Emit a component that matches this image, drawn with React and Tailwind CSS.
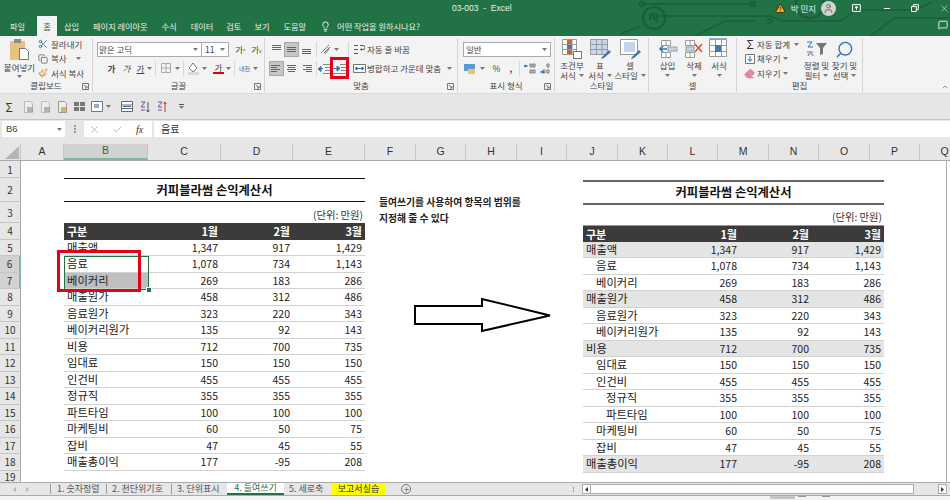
import React from 'react';
import { Scissors, Copy, Paintbrush, Lightbulb, Search, Eraser, X, Check, MessageSquare, Plus, User, TriangleAlert, ChevronDown } from 'lucide-react';

// === 데이터 ===
const COLUMNS = [
  { l: 'A', w: 'w-[43px]' }, { l: 'B', w: 'w-[84px]', on: true }, { l: 'C', w: 'w-[73px]' }, { l: 'D', w: 'w-[72px]' },
  { l: 'E', w: 'w-[72px]' }, { l: 'F', w: 'w-[51px]' }, { l: 'G', w: 'w-[50px]' }, { l: 'H', w: 'w-[51px]' },
  { l: 'I', w: 'w-[50px]' }, { l: 'J', w: 'w-[51px]' }, { l: 'K', w: 'w-[50px]' }, { l: 'L', w: 'w-[50px]' },
  { l: 'M', w: 'w-[51px]' }, { l: 'N', w: 'w-[50px]' }, { l: 'O', w: 'w-[51px]' }, { l: 'P', w: 'w-[50px]' },
  { l: 'Q', w: 'w-[50px]' },
];

const ROWS = [
  { n: 1, h: 'h-[17px]' }, { n: 2, h: 'h-[24px]' }, { n: 3, h: 'h-[21px]' }, { n: 4, h: 'h-[16.5px]' },
  { n: 5, h: 'h-[16.5px]' }, { n: 6, h: 'h-[16.5px]', on: true }, { n: 7, h: 'h-[16.5px]', on: true },
  { n: 8, h: 'h-[16.5px]' }, { n: 9, h: 'h-[16.5px]' }, { n: 10, h: 'h-[16.5px]' }, { n: 11, h: 'h-[16.5px]' },
  { n: 12, h: 'h-[16.5px]' }, { n: 13, h: 'h-[16.5px]' }, { n: 14, h: 'h-[16.5px]' }, { n: 15, h: 'h-[16.5px]' },
  { n: 16, h: 'h-[16.5px]' }, { n: 17, h: 'h-[16.5px]' }, { n: 18, h: 'h-[16.5px]' }, { n: 19, h: 'h-[12.5px]' },
];

const DATA = [
  ['매출액', '1,347', '917', '1,429', 0, true],
  ['음료', '1,078', '734', '1,143', 1],
  ['베이커리', '269', '183', '286', 1],
  ['매출원가', '458', '312', '486', 0, true],
  ['음료원가', '323', '220', '343', 1],
  ['베이커리원가', '135', '92', '143', 1],
  ['비용', '712', '700', '735', 0, true],
  ['임대료', '150', '150', '150', 1],
  ['인건비', '455', '455', '455', 1],
  ['정규직', '355', '355', '355', 2],
  ['파트타임', '100', '100', '100', 2],
  ['마케팅비', '60', '50', '75', 1],
  ['잡비', '47', '45', '55', 1],
  ['매출총이익', '177', '-95', '208', 0, true],
];

const INDENT = ['pl-[3px]', 'pl-[13px]', 'pl-[23px]'];

// === 아이콘 ===
const Caret = ({ className = '' }) => (
  <svg width="5" height="3" viewBox="0 0 5 3" className={`shrink-0 ${className}`}><path d="M0 0h5L2.5 3z" fill="#777" /></svg>
);

const Lines = ({ rows }) => (
  <svg width="13" height="11" viewBox="0 0 13 11">
    {rows.map(([x1, x2, y]) => <line key={y} x1={x1} x2={x2} y1={y + 0.5} y2={y + 0.5} stroke="#666" />)}
  </svg>
);

const IconBtn = ({ on, children }) => (
  <div className={`w-[15px] h-[15px] flex items-center justify-center ${on ? 'bg-[#c6c6c6] border border-[#a8a8a8]' : ''}`}>{children}</div>
);

const Launcher = () => (
  <svg width="7" height="7" viewBox="0 0 7 7" className="absolute right-[3px] bottom-[2px]">
    <path d="M.5.5h6v6h-6zM2 2l3 3M5 3v2H3" fill="none" stroke="#777" />
  </svg>
);

const Sep = () => <div className="w-px h-[15px] bg-[#d8d8d8] mx-[3px]" />;

const GridIcon = ({ children }) => (
  <svg width="24" height="22" viewBox="0 0 24 22">
    <path d="M2.5 1.5h17v17h-17zM2.5 7.5h17M2.5 13.5h17M8.5 1.5v17M14.5 1.5v17" fill="#fff" stroke="#9a9a9a" />
    {children}
  </svg>
);

const Brush = () => <path d="M14 19l7-7 2 2-7 6-3 1z" fill="#3f78b5" />;

const Circuit = () => (
  <svg width="330" height="36" viewBox="0 0 330 36" className="absolute right-0 top-0" fill="none" stroke="#1a5f39" strokeWidth="1.5">
    <path d="M22 4h112M36 16h115l10 5h60l15-11h60l16-8" />
    <circle cx="22" cy="4" r="2.5" /><circle cx="133" cy="4" r="2.5" />
    <circle cx="34" cy="18" r="11" strokeWidth="2" />
    <path d="M30 14l8 8M30 14v6M30 14h6" strokeWidth="2" />
    <circle cx="190" cy="4" r="14" strokeWidth="2.5" />
    <circle cx="36" cy="16" r="2" /><circle cx="150" cy="21" r="2" />
    <path d="M0 34l20-8M75 36l30-15h30" />
    <path d="M250 36l25-18h55" />
  </svg>
);

// === 리본 ===
const Group = ({ label, className, launcher, children }) => (
  <div className={`relative shrink-0 flex flex-col border-r border-[#d4d4d4] mt-[2px] mb-px ${className}`}>
    <div className="flex-1 min-h-0">{children}</div>
    <div className="h-[13px] leading-[13px] text-center">{label}</div>
    {launcher && <Launcher />}
  </div>
);

const BigBtn = ({ icon, top, bottom, w }) => (
  <div className={`flex flex-col items-center shrink-0 ${w}`}>
    <div className="h-[22px] flex items-center justify-center">{icon}</div>
    <div className="h-[10px] leading-[10px]">{top}</div>
    <div className="h-[10px] leading-[10px] flex items-center gap-[3px]">{bottom}<Caret /></div>
  </div>
);

const Ribbon = () => (
  <div className="h-[57px] shrink-0 bg-[#f3f3f3] flex text-[8.5px] text-[#444]">
    <Group label="클립보드" className="w-[93px]" launcher>
      <div className="flex pl-[3px] pt-[1px]">
        <div className="w-[33px] flex flex-col items-center">
          <svg width="22" height="22" viewBox="0 0 22 22">
            <rect x="1" y="2" width="15" height="19" fill="#e8c27c" />
            <rect x="5" y="0" width="7" height="4" fill="#8a8a8a" />
            <path d="M10.5 9.5h6l3 3v8h-9z" fill="#fff" stroke="#777" />
          </svg>
          <div className="leading-[11px] mt-[1px]">붙여넣기</div>
          <Caret className="mt-[2px]" />
        </div>
        <div className="ml-[2px] -mt-[2px] flex flex-col">
          <div className="h-[14.5px] flex items-center gap-[3px]"><Scissors size={10} color="#35689c" /><span>잘라내기</span></div>
          <div className="h-[14.5px] flex items-center gap-[3px]"><Copy size={10} color="#667" /><span>복사</span><Caret className="ml-[6px]" /></div>
          <div className="h-[14.5px] flex items-center gap-[3px]"><Paintbrush size={10} color="#c68a2e" /><span>서식 복사</span></div>
        </div>
      </div>
    </Group>

    <Group label="글꼴" className="w-[172px]" launcher>
      <div className="pl-[4px] pt-[4px]">
        <div className="flex items-center">
          <div className="w-[105px] h-[15px] bg-white border border-[#ababab] flex items-center justify-between px-[1px] pr-[3px]">맑은 고딕<Caret /></div>
          <div className="w-[27px] h-[15px] bg-white border border-[#ababab] border-l-0 flex items-center justify-between pl-[3px] pr-[3px]">11<Caret /></div>
          <span className="ml-[4px] w-[15px] text-center">가<span className="text-[5px]">^</span></span>
          <span className="ml-[1px] w-[15px] text-center">가<span className="text-[5px]">v</span></span>
        </div>
        <div className="flex items-center mt-[3px] h-[17px] pl-[7px]">
          <span className="w-[15px] text-center font-bold">가</span>
          <span className="w-[15px] text-center italic">가</span>
          <span className="w-[13px] text-center underline">가</span>
          <Caret />
          <Sep />
          <svg width="12" height="11" viewBox="0 0 12 11" className="ml-[1px]"><path d="M1.5.5h9v9h-9zM1.5 5h9M6 .5v9" fill="none" stroke="#aaa" /></svg>
          <Caret className="ml-[3px]" />
          <Sep />
          <svg width="13" height="13" viewBox="0 0 13 13"><path d="M6 1l4 5-4 4-4-4z" fill="#fff" stroke="#777" /><rect x="1" y="10" width="11" height="3" fill="#d9d9d9" /></svg>
          <Caret className="ml-[2px] mr-[6px]" />
          <div className="flex flex-col items-center w-[11px] leading-[9px]"><span>가</span><span className="w-[11px] h-[2px] bg-[#e00000]" /></div>
          <Caret className="ml-[2px]" />
          <Sep />
          <span className="text-[6px] leading-[6px] w-[13px] text-center text-[#3a6ea5]">내천</span>
          <Caret className="ml-[2px]" />
        </div>
      </div>
    </Group>

    <Group label="맞춤" className="w-[193px]" launcher>
      <div className="pl-[4px] pt-[4px]">
        <div className="flex items-center h-[15px]">
          <IconBtn><Lines rows={[[2, 11, 1], [2, 11, 3], [2, 11, 5]]} /></IconBtn>
          <IconBtn on><Lines rows={[[2, 11, 3], [2, 11, 5], [2, 11, 7]]} /></IconBtn>
          <IconBtn><Lines rows={[[2, 11, 5], [2, 11, 7], [2, 11, 9]]} /></IconBtn>
          <div className="w-px h-[15px] bg-[#d8d8d8] ml-[2px] mr-[3px]" />
          <svg width="11" height="11" viewBox="0 0 11 11"><path d="M1 9L9 1M4 9l6-6M9 5l-4 5" fill="none" stroke="#777" /></svg>
          <Caret className="ml-[3px]" />
          <div className="w-px h-[15px] bg-[#d8d8d8] ml-[9px] mr-[4px]" />
          <svg width="12" height="11" viewBox="0 0 12 11"><path d="M1 1.5h4M1 5.5h4M1 9.5h4M7 1.5h3a2 2 0 010 4H7" fill="none" stroke="#555" /><path d="M7 5.5l2-1.500v3z" fill="#2f75b5" /></svg>
          <span className="ml-[2px]">자동 줄 바꿈</span>
        </div>
        <div className="flex items-center h-[15px] mt-[4px]">
          <IconBtn on><Lines rows={[[1, 10, 2], [1, 7, 4], [1, 10, 6], [1, 7, 8]]} /></IconBtn>
          <IconBtn><Lines rows={[[2, 11, 2], [3, 10, 4], [2, 11, 6], [3, 10, 8]]} /></IconBtn>
          <IconBtn><Lines rows={[[3, 12, 2], [6, 12, 4], [3, 12, 6], [6, 12, 8]]} /></IconBtn>
          <div className="w-px h-[15px] bg-[#d8d8d8] ml-[2px] mr-px" />
          <svg width="13" height="11" viewBox="0 0 13 11" className="mr-[2px]"><path d="M5 1.5h8M7 4.5h6M7 7.5h6M5 10.5h8" stroke="#888" /><path d="M5 5.5H2M3 3.5L0 6l3 2.5z" fill="#2f75b5" stroke="#2f75b5" /></svg>
          <div className="relative w-[13px] h-[11px] mr-[2px]">
            <svg width="13" height="11" viewBox="0 0 13 11"><path d="M7 1.5h6M8 4.5h5M8 7.5h5M0 10.5h13" stroke="#888" /><path d="M0 5.5h4M4 3l3 2.5L4 8z" fill="#2f75b5" stroke="#2f75b5" /></svg>
            <div className="absolute -left-[3px] -top-[6px] w-[19px] h-[22px] border-[3px] border-[#e2001a]" />
          </div>
          <div className="w-px h-[15px] bg-[#d8d8d8] ml-px mr-[3px]" />
          <svg width="13" height="11" viewBox="0 0 13 11"><path d="M.5 1.5h12v8H.5z" fill="#fff" stroke="#777" /><path d="M2 5.5h9M2 5.5l2-1.500v3zM11 5.5L9 4v3z" fill="#2f75b5" stroke="#2f75b5" /></svg>
          <span className="ml-px">병합하고 가운데 맞춤</span>
          <Caret className="ml-[6px]" />
        </div>
      </div>
    </Group>

    <Group label="표시 형식" className="w-[97px]" launcher>
      <div className="pl-[5px] pt-[4px]">
        <div className="w-[88px] h-[15px] bg-white border border-[#ababab] flex items-center justify-between pl-[2px] pr-[3px]">일반<Caret /></div>
        <div className="flex items-center h-[17px] mt-[3px] pl-[1px]">
          <svg width="12" height="12" viewBox="0 0 12 12"><rect x="0" y="1" width="11" height="7" fill="#5b9bd5" /><rect x="4" y="6" width="7" height="5" fill="#e8c27c" /></svg>
          <Caret className="ml-[4px]" />
          <span className="ml-[5px] w-[13px] text-center">%</span>
          <span className="ml-[2px] w-[12px] text-center font-bold">,</span>
          <div className="w-px h-[15px] bg-[#d8d8d8] ml-[2px] mr-[4px]" />
          <svg width="12" height="12" viewBox="0 0 12 12"><path d="M1 3h3M2 2l-2 1 2 1z" stroke="#2f75b5" fill="#2f75b5" /><path d="M6 1h2v3H6zM9 1h2v3H9zM6 7h2v3H6zM9 7h2v3H9z" fill="none" stroke="#777" /></svg>
          <svg width="12" height="12" viewBox="0 0 12 12" className="ml-[3px]"><path d="M8 1h2v3H8zM8 7h2v3H8zM4 7h2v3H4z" fill="none" stroke="#777" /><path d="M1 9h2M3 8l2 1-2 1z" stroke="#2f75b5" fill="#2f75b5" /></svg>
        </div>
      </div>
    </Group>

    <Group label="스타일" className="w-[94px]">
      <div className="flex pl-[2px]">
        <BigBtn w="w-[30px]" top="조건부" bottom="서식" icon={
          <svg width="22" height="22" viewBox="0 0 22 22">
            <path d="M1.5 1.5h14v15h-14zM1.5 6.5h14M1.5 11.5h14M6.5 1.5v15M11 1.5v15" fill="#fff" stroke="#9a9a9a" />
            <rect x="6" y="2" width="5" height="4" fill="#d8612a" /><rect x="6" y="7" width="5" height="4" fill="#3f78b5" /><rect x="6" y="12" width="5" height="4" fill="#d8612a" />
            <rect x="12.5" y="13.5" width="8" height="7" fill="#fff" stroke="#777" />
          </svg>} />
        <BigBtn w="w-[26px]" top="표" bottom="서식" icon={
          <svg width="24" height="22" viewBox="0 0 24 22">
            <path d="M2.5 1.5h17v15h-17z" fill="#c9d7ea" stroke="#9a9a9a" />
            <path d="M2.5 6.5h17M2.5 11.5h17M8.5 1.5v15M14 1.5v15" stroke="#9a9a9a" fill="none" /><Brush />
          </svg>} />
        <BigBtn w="w-[34px]" top="셀" bottom="스타일" icon={
          <svg width="24" height="22" viewBox="0 0 24 22">
            <path d="M2.5 1.5h17v15h-17z" fill="#fff" stroke="#9a9a9a" />
            <rect x="6" y="4" width="11" height="10" fill="#c4d5ea" /><Brush />
          </svg>} />
      </div>
    </Group>

    <Group label="셀" className="w-[88px]">
      <div className="flex pl-[5px]">
        <BigBtn w="w-[27px]" top="삽입" bottom="" icon={
          <svg width="20" height="20" viewBox="0 0 20 20">
            <path d="M3.5 1.5h9v5h-9zM3.5 13.5h9v5h-9zM8 1.5v5M8 13.5v5" fill="#fff" stroke="#9a9a9a" />
            <rect x="10" y="8" width="9" height="4" fill="#c4d5ea" stroke="#9a9a9a" />
            <path d="M9 10H2M5 7l-3 3 3 3" fill="none" stroke="#2f75b5" strokeWidth="1.5" />
          </svg>} />
        <BigBtn w="w-[26px]" top="삭제" bottom="" icon={
          <svg width="20" height="20" viewBox="0 0 20 20">
            <path d="M1.5 1.5h9v5h-9zM1.5 13.5h9v5h-9zM6 1.5v5M6 13.5v5" fill="#fff" stroke="#9a9a9a" />
            <rect x="2" y="8" width="8" height="4" fill="#c4d5ea" stroke="#9a9a9a" />
            <path d="M11 5l7 8M18 5l-7 8" stroke="#d8552a" strokeWidth="1.5" />
          </svg>} />
        <BigBtn w="w-[24px]" top="서식" bottom="" icon={
          <GridIcon><rect x="8" y="7" width="6" height="7" fill="#3f78b5" /><path d="M2 0h18" stroke="#2f75b5" /></GridIcon>} />
      </div>
    </Group>

    <Group label="편집" className="w-[126px]">
      <div className="flex pl-[7px]">
        <div className="flex flex-col w-[59px] -mt-[1px]">
          <div className="h-[14.5px] flex items-center"><span className="w-[12px] text-[12px] leading-[12px] text-center text-[#333]">Σ</span><span className="ml-px">자동 합계</span><Caret className="ml-[4px]" /></div>
          <div className="h-[14.5px] flex items-center">
            <svg width="10" height="10" viewBox="0 0 10 10" className="ml-px"><path d="M.5.5h9v9h-9z" fill="#fff" stroke="#777" /><path d="M5 2v5M3 5l2 2.5L7 5" fill="none" stroke="#2f75b5" /></svg>
            <span className="ml-[2px]">채우기</span><Caret className="ml-[3px]" />
          </div>
          <div className="h-[14.5px] flex items-center"><Eraser size={11} color="#dd6b87" fill="#e88aa0" /><span className="ml-[2px]">지우기</span><Caret className="ml-[3px]" /></div>
        </div>
        <BigBtn w="w-[27px]" top="정렬 및" bottom="필터" icon={
          <svg width="22" height="18" viewBox="0 0 22 18">
            <path d="M1 2h5l-4 5h5" fill="none" stroke="#2f75b5" /><path d="M2 16a2.5 2.5 0 015 0M1 12h6" fill="none" stroke="#8a5aa8" />
            <path d="M10 3h11l-4 5v6l-3 1V8z" fill="#777" />
          </svg>} />
        <BigBtn w="w-[29px]" top="찾기 및" bottom="선택" icon={<Search size={19} color="#2f75b5" strokeWidth={1.8} className="-scale-x-100" />} />
      </div>
    </Group>
    <div className="flex-1 relative">
      <ChevronDown size={8} color="#666" className="absolute right-[1px] bottom-[2px] rotate-180" />
    </div>
  </div>
);

const QatIcon = ({ c1 = '#bbb', c2 = '#8c8c8c' }) => (
  <svg width="11" height="12" viewBox="0 0 11 12"><path d="M1.5.5h6l2 2v9h-8z" fill="#eee" stroke={c1} /><rect x="4" y="6" width="6" height="5" fill={c2} opacity=".6" /></svg>
);

// === 표 ===
const TitleCell = ({ className }) => (
  <div className={`flex items-center justify-center text-[12.3px] font-bold text-[#111] ${className}`}>커피블라썸 손익계산서</div>
);

const Row = ({ r, mark, sel }) => (
  <div className={`grid grid-cols-[84px_73px_72px_72px] h-[16.5px] items-center border-b border-[#d2d2d2] text-[#222] ${mark && r[5] ? 'bg-[#e4e4e4]' : ''}`}>
    <div className={`text-[11.3px] leading-[15px] h-full ${INDENT[mark ? r[4] : 0]} ${sel ? 'bg-[#bfbfbf]' : ''}`}>{r[0]}</div>
    {[r[1], r[2], r[3]].map((v, i) => <div key={i} className="text-right pr-[3px] text-[10.5px] leading-[15px]">{v}</div>)}
  </div>
);

const HeadRow = ({ className }) => (
  <div className={`grid grid-cols-[84px_73px_72px_72px] items-center bg-[#3b3b3b] text-white font-bold text-[11px] ${className}`}>
    <div className="pl-[3px]">구분</div>
    <div className="text-right pr-[3px]">1월</div>
    <div className="text-right pr-[3px]">2월</div>
    <div className="text-right pr-[3px]">3월</div>
  </div>
);

export default function App() {
  return (
    <div className="w-[950px] h-[500px] overflow-hidden flex flex-col bg-white whitespace-nowrap font-['Noto_Sans_CJK_KR','Liberation_Sans',sans-serif]">
      {/* 제목 표시줄 + 탭 */}
      <div className="relative h-[36px] shrink-0 bg-[#217346] text-[#e8f1ec] text-[8.2px]">
        <Circuit />
        <div className="relative h-[16px] flex items-center">
          <span className="ml-[452px] w-[54px] font-['Liberation_Sans',sans-serif] text-[8.5px]">03-003 &nbsp;-&nbsp; Excel</span>
          <TriangleAlert size={11} color="#3d2a00" fill="#f0a830" className="ml-[269px]" />
          <span className="ml-[5px] text-[8.5px]">박 민지</span>
          <div className="ml-[5px] w-[15px] h-[15px] rounded-full bg-[#d2d2d2] flex items-center justify-center"><User size={11} color="#666" /></div>
          <svg width="9" height="8" viewBox="0 0 9 8" className="ml-[16px]"><path d="M.5.5h8v7h-8z" fill="none" stroke="#fff" /><path d="M4.5 6V2.5M3 4l1.5-2L6 4" fill="none" stroke="#fff" /></svg>
          <div className="ml-[23px] w-[7px] h-px bg-white" />
          <svg width="8" height="8" viewBox="0 0 8 8" className="ml-[21px]"><path d="M.5 2.5h5v5h-5zM2.5 2.5v-2h5v5h-2" fill="none" stroke="#fff" /></svg>
          <X size={11} color="#fff" strokeWidth={1.2} className="ml-[20px]" />
        </div>
        <div className="relative h-[20px] flex items-center">
          <span className="ml-[10px] w-[15px]">파일</span>
          <div className="ml-[12px] w-[20px] h-[20px] bg-[#f3f3f3] text-[#217346] flex items-center justify-center">홈</div>
          <span className="ml-[7px]">삽입</span>
          <span className="ml-[14px]">페이지 레이아웃</span>
          <span className="ml-[14px]">수식</span>
          <span className="ml-[14px]">데이터</span>
          <span className="ml-[13px]">검토</span>
          <span className="ml-[13px]">보기</span>
          <span className="ml-[14px]">도움말</span>
          <Lightbulb size={11} color="#fff" className="ml-[14px]" />
          <span className="ml-[6px]">어떤 작업을 원하시나요?</span>
          <MessageSquare size={10} color="#fff" className="absolute right-[2px] top-[4px]" />
        </div>
      </div>

      <Ribbon />

      {/* 빠른 실행 도구 모음 */}
      <div className="h-[27px] shrink-0 bg-[#e6e6e6] border-b border-[#c4c4c4] border-t border-t-[#dadada] flex items-center pl-[4px] gap-[6px]">
        <span className="w-[10px] text-[12px] leading-[12px] text-center text-[#333]">Σ</span>
        <span className="ml-[3px] flex"><QatIcon /></span>
        <QatIcon />
        <QatIcon c1="#999" c2="#c68a2e" />
        <svg width="11" height="9" viewBox="0 0 11 9"><path d="M0 0h5v4H0zM6 0h5v4H6zM0 5h5v4H0zM6 5h5v4H6z" fill="#777" /></svg>
        <svg width="12" height="11" viewBox="0 0 12 11"><path d="M.5.5h11v10H.5z" fill="#fff" stroke="#777" /><rect x="3" y="3" width="5" height="4" fill="#8fb0d5" /></svg>
        <Caret className="-ml-[3px]" />
        <svg width="12" height="11" viewBox="0 0 12 11" className="ml-[4px]"><path d="M.5.5h11v10H.5zM.5 4h11M.5 7.5h11" fill="#fff" stroke="#667" /><path d="M2 5.5h8" stroke="#2f75b5" /></svg>
        <svg width="11" height="12" viewBox="0 0 11 12"><path d="M2 1h4L2 6h4M2 9h4" fill="none" stroke="#7a4fa3" /><path d="M9 1v10M7.5 9L9 11l1.5-2" fill="none" stroke="#555" /></svg>
        <svg width="11" height="12" viewBox="0 0 11 12"><path d="M2 1h4L2 6h4M2 9h4" fill="none" stroke="#7a4fa3" /><path d="M9 1v10M7.5 3L9 1l1.5 2" fill="none" stroke="#c0392b" /></svg>
        <span className="ml-[6px] flex flex-col gap-px"><span className="w-[5px] h-px bg-[#555]" /><Caret /></span>
      </div>

      {/* 수식 입력줄 */}
      <div className="h-[24px] shrink-0 bg-[#e6e6e6] pt-px">
        <div className="h-[16px] flex text-[10px] text-[#444]">
          <div className="ml-[2px] w-[63px] bg-white flex items-center justify-between pl-[4px] pr-[3px] font-['Liberation_Sans',sans-serif] text-[9.5px]">B6<Caret /></div>
          <div className="w-[19px] flex flex-col items-center justify-center gap-px"><span className="w-[2px] h-[2px] bg-[#999]" /><span className="w-[2px] h-[2px] bg-[#999]" /><span className="w-[2px] h-[2px] bg-[#999]" /></div>
          <div className="w-[68px] bg-white flex items-center pl-[5px]">
            <X size={11} color="#b5b5b5" />
            <Check size={11} color="#b5b5b5" className="ml-[12px]" />
            <span className="ml-[13px] italic font-['Liberation_Serif',serif] text-[10px] text-[#333]">fx</span>
          </div>
          <div className="ml-[2px] flex-1 bg-white pl-[7px] leading-[16px] text-[10px] text-[#333]">음료</div>
        </div>
      </div>

      {/* 열 머리글 */}
      <div className="h-[17px] shrink-0 flex bg-[#e6e6e6] border-b border-[#ababab] overflow-hidden">
        <div className="w-[21px] shrink-0 border-r border-[#c6c6c6] flex items-end justify-end pr-[1px] pb-[1px]">
          <svg width="14" height="13" viewBox="0 0 14 13"><path d="M14 0v13H0z" fill="#b5b5b5" /></svg>
        </div>
        {COLUMNS.map((c) => (
          <div key={c.l} className={`shrink-0 flex items-center justify-center border-r border-[#c6c6c6] font-['Liberation_Sans',sans-serif] text-[10.5px] ${c.w} ${c.on ? 'bg-[#d2d2d2] text-[#1d6a41] border-b-2 border-b-[#7fb79b]' : 'text-[#333]'}`}>{c.l}</div>
        ))}
      </div>

      {/* 시트 */}
      <div className="flex-1 min-h-0 flex overflow-hidden">
        <div className="w-[21px] shrink-0 flex flex-col">
          {ROWS.map((r) => (
            <div key={r.n} className={`shrink-0 flex items-center justify-center border-b border-[#c6c6c6] text-[10px] text-[#333] box-border ${r.h} ${r.on ? 'bg-[#d2d2d2] border-r-2 border-r-[#7fb79b]' : 'bg-[#e6e6e6] border-r border-r-[#ababab]'}`}>{r.n}</div>
          ))}
        </div>
        <div className="flex-1 flex pl-[43px] min-w-0">
          {/* 왼쪽 표 */}
          <div className="relative w-[301px] shrink-0 pt-[17px]">
            <TitleCell className="h-[24px] border-y border-[#111]" />
            <div className="h-[21px] flex items-end justify-end pr-[2px] text-[10.3px] text-[#333] leading-[16px]">(단위: 만원)</div>
            <HeadRow className="h-[16.5px]" />
            {DATA.map((r) => <Row key={r[0]} r={r} sel={r[0] === '베이커리'} />)}
            <div className="absolute left-0 top-[95px] w-[85px] h-[33.5px] border border-[#217346]" />
            <div className="absolute left-[82px] top-[126px] w-[4px] h-[4px] bg-[#217346] border border-white box-content" />
            <div className="absolute -left-[7px] top-[89px] w-[84px] h-[42px] border-[3px] border-[#e2001a]" />
          </div>
          {/* 설명 + 화살표 */}
          <div className="w-[218px] shrink-0 pt-[33px] pl-[14px]">
            <div className="text-[9.8px] font-bold leading-[16px] text-[#222]">
              <div>들여쓰기를 사용하여 항목의 범위를</div>
              <div>지정해 줄 수 있다</div>
            </div>
            <svg width="138" height="36" viewBox="0 0 138 36" className="mt-[71px] ml-[35px]">
              <path d="M1 9h67V2l68 16.5L68 34v-7H1z" fill="#fff" stroke="#000" strokeWidth="2" />
            </svg>
          </div>
          {/* 오른쪽 표 */}
          <div className="w-[301px] shrink-0 pt-[18.5px]">
            <TitleCell className="h-[25px] border-y-2 border-[#666]" />
            <div className="h-[20px] flex items-end justify-end pr-[2px] text-[10.3px] text-[#333] leading-[16px]">(단위: 만원)</div>
            <HeadRow className="h-[17px] border-t border-[#999]" />
            {DATA.map((r) => <Row key={r[0]} r={r} mark />)}
          </div>
        </div>
        <div className="w-[4px] shrink-0 border-l border-[#ababab] bg-white" />
      </div>

      {/* 시트 탭 */}
      <div className="h-[14px] shrink-0 bg-[#e6e6e6] border-y border-[#ababab] flex items-center text-[9px] text-[#555]">
        <div className="w-[50px] flex items-center pl-[13px] gap-[10px] text-[#bbb]">
          <svg width="3" height="5" viewBox="0 0 3 5"><path d="M3 0v5L0 2.5z" fill="#b5b5b5" /></svg>
          <svg width="3" height="5" viewBox="0 0 3 5"><path d="M0 0v5l3-2.5z" fill="#b5b5b5" /></svg>
        </div>
        <div className="w-[56px] h-[10px] border-l border-[#999] pl-[6px] leading-[10px]">1. 숫자정렬</div>
        <div className="w-[65px] h-[10px] border-l border-[#999] pl-[5px] leading-[10px]">2. 천단위기호</div>
        <div className="w-[56px] h-[10px] border-l border-[#999] pl-[5px] leading-[10px]">3. 단위표시</div>
        <div className="h-[12px] w-[57px] bg-white border-b-2 border-[#217346] text-[#217346] text-center leading-[10px]">4. 들여쓰기</div>
        <div className="w-[47px] h-[10px] pl-[5px] leading-[10px]">5. 세로축</div>
        <div className="h-[12px] w-[53px] ml-[1px] bg-[#ffff00] text-[#333] text-center leading-[11px]">보고서실습</div>
        <div className="ml-[16px] w-[10px] h-[10px] rounded-full border border-[#777] flex items-center justify-center"><Plus size={7} color="#555" /></div>
        <div className="ml-auto flex items-center">
          <span className="flex flex-col gap-px mr-[8px]"><span className="w-px h-[2px] bg-[#999]" /><span className="w-px h-[2px] bg-[#999]" /></span>
          <div className="w-[9px] h-[10px] bg-white border border-[#ababab] flex items-center justify-center"><svg width="3" height="5" viewBox="0 0 3 5"><path d="M3 0v5L0 2.5z" fill="#333" /></svg></div>
          <div className="w-[323px] h-[10px] bg-white border border-[#ababab] border-l-0" />
          <div className="w-[24px]" />
          <div className="w-[9px] h-[10px] bg-white border border-[#ababab] flex items-center justify-center mr-[3px]"><svg width="3" height="5" viewBox="0 0 3 5"><path d="M0 0v5l3-2.5z" fill="#333" /></svg></div>
        </div>
      </div>

      {/* 상태 표시줄 */}
      <div className="h-[4px] shrink-0 bg-[#f3f3f3] flex items-start">
        <div className="ml-[770px] w-[25px] h-[3px] bg-[#c6c6c6]" />
        <div className="ml-[3px] w-[8px] h-[1px] bg-[#999]" />
        <div className="ml-[16px] w-[8px] h-[1px] bg-[#999]" />
      </div>
    </div>
  );
}
